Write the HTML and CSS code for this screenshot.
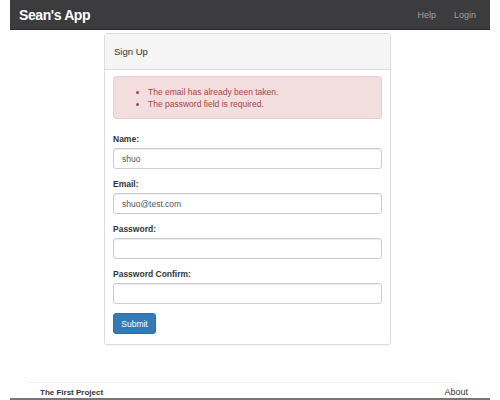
FILE: index.html
```html
<!DOCTYPE html>
<html>
<head>
<meta charset="utf-8">
<link rel="stylesheet" href="styles.css">
</head>
<body>
<div class="page">
  <nav class="navbar">
    <span class="brand">Sean's App</span>
    <div class="nav-links">
      <a>Help</a>
      <a>Login</a>
    </div>
  </nav>
  <main class="main">
    <div class="panel">
      <div class="panel-heading">Sign Up</div>
      <div class="panel-body">
        <div class="alert">
          <ul>
            <li>The email has already been taken.</li>
            <li>The password field is required.</li>
          </ul>
        </div>
        <form class="form">
          <div class="group">
            <label>Name:</label>
            <div class="input">shuo</div>
          </div>
          <div class="group">
            <label>Email:</label>
            <div class="input">shuo@test.com</div>
          </div>
          <div class="group">
            <label>Password:</label>
            <div class="input"></div>
          </div>
          <div class="group">
            <label>Password Confirm:</label>
            <div class="input"></div>
          </div>
          <div class="btn">Submit</div>
        </form>
      </div>
    </div>
  </main>
  <footer class="footer">
    <span class="foot-title">The First Project</span>
    <span class="foot-link">About</span>
  </footer>
  <div class="bottom-line"></div>
</div>
</body>
</html>
```
FILE: styles.css
```css
html, body {
  margin: 0;
  padding: 0;
  background: #fff;
  font-family: "Liberation Sans", Arial, sans-serif;
  color: #333;
}
.page {
  width: 480px;
  margin: 0 10px;
  height: 400px;
  display: flex;
  flex-direction: column;
}
.navbar {
  height: 29px;
  background: #3c3c3e;
  border-bottom: 1px solid #2a2a2a;
  display: flex;
  align-items: center;
  justify-content: space-between;
  padding: 0 14px 0 9px;
  flex-shrink: 0;
}
.brand {
  color: #fff;
  font-weight: bold;
  font-size: 14px;
  letter-spacing: -0.4px;
}
.nav-links {
  display: flex;
  gap: 18px;
  font-size: 9px;
  color: #a0a0a0;
}
.main {
  display: flex;
  justify-content: center;
  padding-top: 3px;
  padding-right: 5px;
}
.panel {
  width: 285px;
  border: 1px solid #ddd;
  border-radius: 3px;
  box-shadow: 0 1px 1px rgba(0,0,0,0.05);
}
.panel-heading {
  background: #f5f5f5;
  border-bottom: 1px solid #ddd;
  height: 35px;
  display: flex;
  align-items: center;
  padding-left: 9px;
  font-size: 9.5px;
  color: #333;
}
.panel-body {
  padding: 6px 8px 10px;
}
.alert {
  background: #f2dede;
  border: 1px solid #ebccd1;
  border-radius: 3px;
  color: #a94442;
  font-size: 8.5px;
  height: 43px;
  box-sizing: border-box;
  display: flex;
  align-items: center;
}
.alert ul {
  margin: 0;
  padding-left: 34px;
  line-height: 12px;
}
.form {
  margin-top: 15px;
  display: flex;
  flex-direction: column;
  gap: 10px;
}
.group {
  display: flex;
  flex-direction: column;
  gap: 4px;
}
label {
  font-weight: bold;
  font-size: 8.5px;
  color: #333;
  line-height: 10px;
}
.input {
  height: 21px;
  box-sizing: border-box;
  border: 1px solid #ccc;
  border-radius: 3px;
  padding: 0 8px;
  font-size: 8.5px;
  color: #555;
  display: flex;
  align-items: center;
  box-shadow: inset 0 1px 1px rgba(0,0,0,0.075);
}
.btn {
  align-self: flex-start;
  width: 43px;
  height: 21px;
  box-sizing: border-box;
  background: #337ab7;
  border: 1px solid #2e6da4;
  border-radius: 3px;
  color: #fff;
  font-size: 8.5px;
  display: flex;
  align-items: center;
  justify-content: center;
  margin-top: -1px;
}
.footer {
  margin-top: auto;
  margin-left: 17px;
  margin-right: 32px;
  border-top: 1px solid #eee;
  height: 14px;
  display: flex;
  justify-content: space-between;
  align-items: flex-end;
  padding: 0 0 0 13px;
}
.foot-title {
  font-weight: bold;
  font-size: 8px;
  color: #333;
}
.foot-link {
  font-size: 9px;
  color: #333;
  margin-right: -10px;
}
.bottom-line {
  height: 2px;
  margin-top: 1px;
  background: #777;
}
```
